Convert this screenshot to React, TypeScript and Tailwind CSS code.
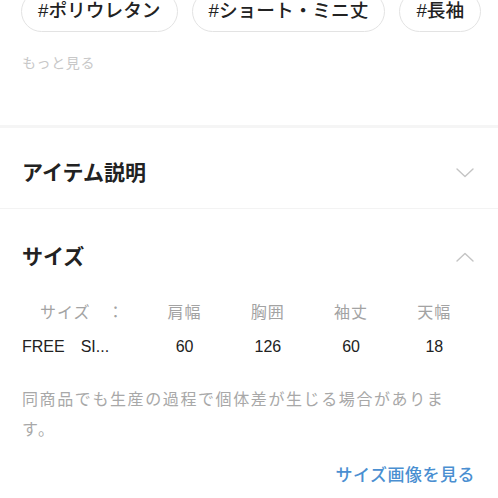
import React from 'react';

const TAGS = ['#ポリウレタン', '#ショート・ミニ丈', '#長袖'];

const COLUMNS = [
  { label: '肩幅', value: '60' },
  { label: '胸囲', value: '126' },
  { label: '袖丈', value: '60' },
  { label: '天幅', value: '18' },
];

function Chevron({ up }: { up?: boolean }) {
  return (
    <svg width="18" height="10" viewBox="0 0 18 10" fill="none" className="shrink-0">
      <path
        d={up ? 'M1 9 L9 1.5 L17 9' : 'M1 1 L9 8.5 L17 1'}
        stroke="#c4c4c4"
        strokeWidth="1.4"
        strokeLinecap="round"
        strokeLinejoin="round"
      />
    </svg>
  );
}

export default function App() {
  return (
    <div
      className="h-[498px] w-[498px] overflow-hidden bg-white"
      style={{ fontFamily: '"Liberation Sans", "Noto Sans CJK JP", sans-serif' }}
    >
      {/* tags */}
      <div className="-mt-[9px] flex gap-[14px] px-[21px]">
        {TAGS.map((t) => (
          <span
            key={t}
            className="flex h-[41px] items-center whitespace-nowrap rounded-full border border-[#e3e3e3] px-[16px] text-[18.7px] font-medium text-[#222]"
          >
            {t}
          </span>
        ))}
      </div>
      <div className="mt-[21px] px-[22px] text-[14px] leading-[20px] tracking-[0.6px] text-[#c8c8c8]">
        もっと見る
      </div>

      <div className="mt-[52px] h-[3px] bg-[#f5f5f5]" />

      {/* item description */}
      <div className="flex h-[80px] items-center justify-between pt-[10px] pl-[22px] pr-[24px]">
        <h2 className="text-[21px] font-bold leading-[28px] text-[#222]">アイテム説明</h2>
        <Chevron />
      </div>
      <div className="h-px bg-[#f3f3f3]" />

      {/* size */}
      <div className="flex h-[96px] items-center justify-between pl-[22px] pr-[24px]">
        <h2 className="text-[21px] font-bold leading-[28px] text-[#222]">サイズ</h2>
        <Chevron up />
      </div>

      <div className="-mt-[4px] px-[22px] text-[16px] leading-[24px]">
        <div className="grid grid-cols-[121px_repeat(4,1fr)] items-center tracking-[1px] text-[#a3a3a3]">
          <span className="pl-[18px] whitespace-pre">サイズ　：</span>
          {COLUMNS.map((c) => (
            <span key={c.label} className="text-center">
              {c.label}
            </span>
          ))}
        </div>
        <div className="mt-[10px] grid grid-cols-[121px_repeat(4,1fr)] items-center text-[#222]">
          <span className="whitespace-pre">FREE　SI...</span>
          {COLUMNS.map((c) => (
            <span key={c.label} className="text-center">
              {c.value}
            </span>
          ))}
        </div>
      </div>

      <p className="mt-[26px] pl-[22px] pr-[46px] text-[16px] leading-[30px] tracking-[1.6px] text-[#a8a8a8]">
        同商品でも生産の過程で個体差が生じる場合があります。
      </p>

      <div className="mt-[19px] flex justify-end pr-[23px]">
        <span className="text-[17px] font-medium leading-[24px] tracking-[0.5px] text-[#4a8fd1]">
          サイズ画像を見る
        </span>
      </div>
    </div>
  );
}
